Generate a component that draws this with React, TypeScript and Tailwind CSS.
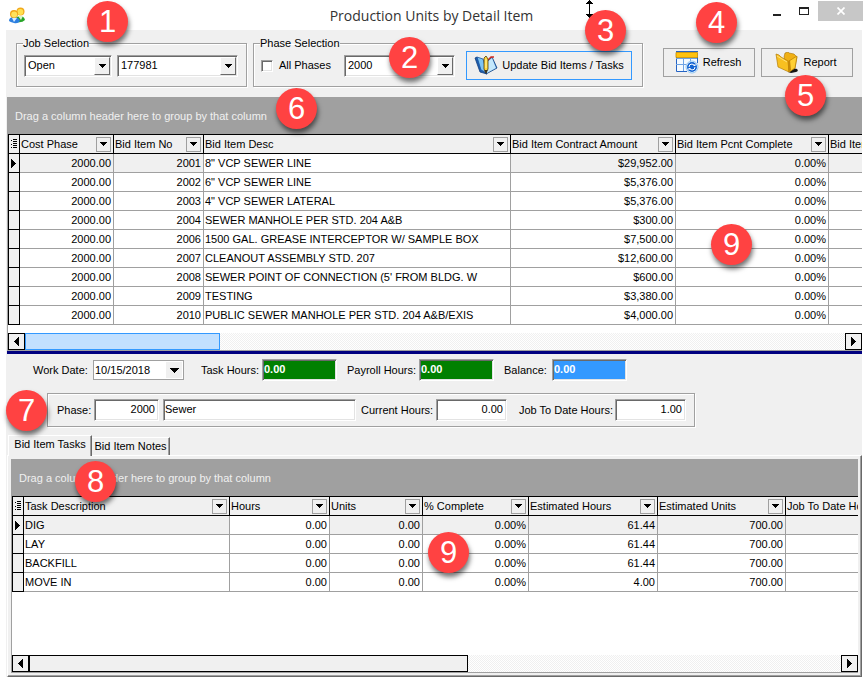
import { useState } from 'react'
import type { ReactNode } from 'react'
import clsx from 'clsx'

interface Column {
  title: string
  width: string
  align?: 'right'
  editable?: boolean
}

const itemColumns: Column[] = [
  { title: 'Cost Phase', width: 'w-[94px]', align: 'right' },
  { title: 'Bid Item No', width: 'w-[90px]', align: 'right' },
  { title: 'Bid Item Desc', width: 'w-[307px]', editable: true },
  { title: 'Bid Item Contract Amount', width: 'w-[165px]', align: 'right' },
  { title: 'Bid Item Pcnt Complete', width: 'w-[153px]', align: 'right' },
  { title: 'Bid Item', width: 'w-auto' },
]

const itemRows = [
  ['2000.00', '2001', '8" VCP SEWER LINE', '$29,952.00', '0.00%', ''],
  ['2000.00', '2002', '6" VCP SEWER LINE', '$5,376.00', '0.00%', ''],
  ['2000.00', '2003', '4" VCP SEWER LATERAL', '$5,376.00', '0.00%', ''],
  ['2000.00', '2004', 'SEWER MANHOLE PER STD. 204 A&B', '$300.00', '0.00%', ''],
  ['2000.00', '2006', '1500 GAL. GREASE INTERCEPTOR W/ SAMPLE BOX', '$7,500.00', '0.00%', ''],
  ['2000.00', '2007', 'CLEANOUT ASSEMBLY STD. 207', '$12,600.00', '0.00%', ''],
  ['2000.00', '2008', "SEWER POINT OF CONNECTION (5' FROM BLDG. W", '$600.00', '0.00%', ''],
  ['2000.00', '2009', 'TESTING', '$3,380.00', '0.00%', ''],
  ['2000.00', '2010', 'PUBLIC SEWER MANHOLE PER STD. 204 A&B/EXIS', '$4,000.00', '0.00%', ''],
]

const taskColumns: Column[] = [
  { title: 'Task Description', width: 'w-[206px]' },
  { title: 'Hours', width: 'w-[100px]', align: 'right', editable: true },
  { title: 'Units', width: 'w-[93px]', align: 'right' },
  { title: '% Complete', width: 'w-[106px]', align: 'right' },
  { title: 'Estimated Hours', width: 'w-[129px]', align: 'right' },
  { title: 'Estimated Units', width: 'w-[128px]', align: 'right' },
  { title: 'Job To Date Hours', width: 'w-auto' },
]

const taskRows = [
  ['DIG', '0.00', '0.00', '0.00%', '61.44', '700.00', ''],
  ['LAY', '0.00', '0.00', '0.00%', '61.44', '700.00', ''],
  ['BACKFILL', '0.00', '0.00', '0.00%', '61.44', '700.00', ''],
  ['MOVE IN', '0.00', '0.00', '0.00%', '4.00', '700.00', ''],
]

const sunken =
  'border border-t-[#a0a0a0] border-l-[#a0a0a0] border-r-white border-b-white shadow-[inset_1px_1px_0_#696969,inset_-1px_-1px_0_#e3e3e3]'
const etched = 'border border-[#a0a0a0] shadow-[1px_1px_0_#fff,inset_1px_1px_0_#fff]'

function DownArrow({ small }: { small?: boolean }) {
  return small ? (
    <svg width="7" height="4" viewBox="0 0 7 4" shapeRendering="crispEdges">
      <path d="M0 0h7v1H6v1H5v1H4v1H3V3H2V2H1V1H0z" />
    </svg>
  ) : (
    <svg width="9" height="5" viewBox="0 0 9 5" shapeRendering="crispEdges">
      <path d="M0 0h9v1H8v1H7v1H6v1H5v1H4V4H3V3H2V2H1V1H0z" />
    </svg>
  )
}

function SideArrow({ left }: { left?: boolean }) {
  return (
    <svg width="5" height="9" viewBox="0 0 5 9" shapeRendering="crispEdges">
      <path d={left ? 'M5 0v9H4V8H3V7H2V6H1V5H0V4h1V3h1V2h1V1h1V0z' : 'M0 0v9h1V8h1V7h1V6h1V5h1V4H4V3H3V2H2V1H1V0z'} />
    </svg>
  )
}

function Badge({ n, className }: { n: number; className: string }) {
  return (
    <span
      className={clsx(
        'pointer-events-none absolute z-20 flex size-[41px] items-center justify-center rounded-full bg-[#ff4242] text-[31px] leading-none text-white shadow-[1px_4px_5px_rgba(0,0,0,0.55)]',
        className
      )}
    >
      {n}
    </span>
  )
}

function ComboBox({ id, label, value, className, flat }: { id: string; label: string; value: string; className: string; flat?: boolean }) {
  return (
    <div className={clsx('relative bg-white', flat ? 'h-5 border border-[#a0a0a0]' : ['h-[22px]', sunken], className)}>
      <select
        id={id}
        aria-label={label}
        defaultValue={value}
        className={clsx('block h-full w-full appearance-none bg-transparent outline-none', flat ? 'px-px' : 'px-[3px]')}
      >
        <option>{value}</option>
      </select>
      <span
        className={clsx(
          'pointer-events-none absolute right-px top-px bottom-px flex w-4 items-center justify-center bg-[#f0f0f0]',
          !flat && 'border border-t-white border-l-white border-r-[#696969] border-b-[#696969]'
        )}
      >
        <DownArrow small={!flat} />
      </span>
    </div>
  )
}

function ToolButton({ icon, children, className }: { icon: ReactNode; children: ReactNode; className: string }) {
  return (
    <button type="button" className={clsx('flex h-[29px] items-center justify-center gap-1 border bg-[#efefef]', className)}>
      {icon}
      <span className="whitespace-nowrap">{children}</span>
    </button>
  )
}

function UsersIcon() {
  return (
    <svg width="18" height="18" viewBox="0 0 18 18">
      <path d="M8 14q0-4 4-4t5 4q-3 3-8 2z" fill="#28a428" />
      <path d="M10 10l3 4 2-4z" fill="#d9f5c8" />
      <circle cx="12.500" cy="5.500" r="4" fill="#f2a91c" />
      <circle cx="12.300" cy="6" r="3" fill="#ffe050" />
      <path d="M1 15q0-4 5-4t6 4q-2 3-6 2T1 15z" fill="#2c7fe0" />
      <path d="M4 12l2 4 3-4z" fill="#d4ecff" />
      <circle cx="6" cy="8" r="4" fill="#f0a418" />
      <circle cx="6.200" cy="8.600" r="3" fill="#ffe25c" />
    </svg>
  )
}

function BookIcon() {
  return (
    <svg width="24" height="21" viewBox="0 0 24 21">
      <path d="M1 3l2-1 6 14 4 3-7-2z" fill="#1c5cb0" stroke="#123f7c" strokeWidth=".8" />
      <path d="M3 2l6 2 4 14-6-3z" fill="#7cc4f4" stroke="#1a56a0" strokeWidth=".8" />
      <path d="M12 19l1-13 5-4 5 11z" fill="#2a78cc" stroke="#123f7c" strokeWidth=".8" />
      <path d="M13 18V7l5-4 4 10z" fill="#c4e8fc" />
      <path d="M14 5l3-3 3 0" fill="none" stroke="#d42d20" strokeWidth="1.300" />
      <path d="M10 3l2-2 2 3v10l-2 4-2-4z" fill="#ffd63b" stroke="#4a3a08" strokeWidth=".8" />
      <path d="M12 4v9" stroke="#fff3a4" />
      <path d="M10.500 15l1.500 4 1.500-4z" fill="#3b3320" />
    </svg>
  )
}

function RefreshIcon() {
  return (
    <svg width="24" height="23" viewBox="0 0 24 23">
      <path d="M1 6h21v14H1z" fill="#f4faff" />
      <path d="M1.500 6v14.500H12M22.500 6v6" fill="none" stroke="#2563c4" />
      <path d="M1 1.500h21.500v5H1z" fill="#ffc20e" stroke="#c08a00" strokeWidth=".8" />
      <path d="M1 .500h22" stroke="#2563c4" />
      <path d="M1 7.500h21M1 13.500h12M8.500 7v13M15.500 7v5" stroke="#6da3e4" />
      <circle cx="17" cy="16" r="6" fill="#fff" stroke="#8fc5f2" />
      <circle cx="17" cy="16" r="5" fill="#1264d2" />
      <path d="M14 16q0-3 3-3l2 1M20 16q0 3-3 3l-2-1" fill="none" stroke="#fff" />
      <path d="M18 15h2.500v-2.500zM16 17h-2.500v2.500z" fill="#fff" />
    </svg>
  )
}

function FolderIcon() {
  return (
    <svg width="24" height="22" viewBox="0 0 24 22">
      <path d="M13 20l5-4 4 1q2 2-1 3l-5 1z" fill="#141414" />
      <path d="M9 5l1-4 3-1 1 1 5 1 3 3-2 11-6 4z" fill="#f0b014" stroke="#a87204" strokeWidth=".6" />
      <path d="M1 2l3 1 2 2 7 4 1 11L3 15z" fill="#f8c020" stroke="#b47c06" strokeWidth=".7" />
      <path d="M14 9l8-5-2 12-6 4z" fill="#ffd034" stroke="#b47c06" strokeWidth=".7" />
      <path d="M13 9l2-1 1 10-2 2z" fill="#c88a08" />
      <path d="M2 4l10 6" stroke="#ffe98c" strokeWidth=".8" />
    </svg>
  )
}

function GroupPanel() {
  return (
    <div className="flex h-[37px] items-center bg-[#a0a0a0] px-2 pt-[2px] text-[#f0f0f0]">Drag a column header here to group by that column</div>
  )
}

function DataGrid({ columns, rows }: { columns: Column[]; rows: string[][] }) {
  return (
    <table className="w-full table-fixed border-separate border-spacing-0">
      <thead>
        <tr className="h-5 bg-[#f0f0f0]">
          <th aria-label="Row" className="w-3 border border-black p-0">
            <svg width="9" height="10" viewBox="0 0 9 10" shapeRendering="crispEdges">
              <path d="M2 1h1v1H2zM2 5h1v1H2zM4 0h4v1H4zM4 2h4v1H4zM4 4h4v1H4zM4 6h4v1H4zM4 8h4v1H4zM2 8h1v1H2z" />
            </svg>
          </th>
          {columns.map((col, i) => (
            <th
              key={col.title}
              className={clsx('overflow-hidden border-y border-black p-0 text-left font-normal', col.width, i < columns.length - 1 && 'border-r')}
            >
              <div className="flex h-[18px] items-center justify-between pl-px pr-[2px]">
                <span className="whitespace-nowrap">{col.title}</span>
                {i < columns.length - 1 && (
                  <button
                    type="button"
                    aria-label={`Filter ${col.title}`}
                    className="flex size-[15px] shrink-0 items-center justify-center border border-[#a0a0a0]"
                  >
                    <DownArrow small />
                  </button>
                )}
              </div>
            </th>
          ))}
        </tr>
      </thead>
      <tbody>
        {rows.map((row, r) => (
          <tr key={r} className="h-[19px]">
            <td className="border-x border-b border-black bg-[#f0f0f0] p-0 pl-[2px]">{r === 0 && <SideArrow />}</td>
            {row.map((cell, c) => (
              <td
                key={c}
                className={clsx(
                  'overflow-hidden border-b border-[#a0a0a0] p-0 whitespace-nowrap',
                  c < row.length - 1 && 'border-r',
                  columns[c].align === 'right' ? 'pr-[2px] text-right' : 'pl-px',
                  r === 0 && !columns[c].editable ? 'bg-[#f0f0f0]' : 'bg-white'
                )}
              >
                {cell}
              </td>
            ))}
          </tr>
        ))}
      </tbody>
    </table>
  )
}

function ScrollBar({ thumb }: { thumb: string }) {
  return (
    <div className="flex h-[17px] bg-[repeating-conic-gradient(#f0f0f0_0_25%,#fff_0_50%)] bg-[length:2px_2px]">
      <button type="button" aria-label="Scroll left" className="flex w-[17px] items-center justify-center border border-black bg-[#f0f0f0]">
        <SideArrow left />
      </button>
      <div className={clsx('border', thumb)} />
      <button type="button" aria-label="Scroll right" className="ml-auto flex w-[17px] items-center justify-center border border-black bg-[#f0f0f0]">
        <SideArrow />
      </button>
    </div>
  )
}

function TotalField({ id, label, labelWidth, color }: { id: string; label: string; labelWidth: string; color: string }) {
  return (
    <div className="flex items-center">
      <label htmlFor={id} className={clsx('whitespace-nowrap', labelWidth)}>{label}</label>
      <input id={id} readOnly defaultValue="0.00" className={clsx('h-[22px] w-[75px] px-px pb-[2px] font-bold text-white outline-none', sunken, color)} />
    </div>
  )
}

function PhaseField({ id, label, labelWidth, value, width }: { id: string; label: string; labelWidth: string; value: string; width: string }) {
  return (
    <div className="flex items-center">
      <label htmlFor={id} className={clsx('whitespace-nowrap', labelWidth)}>{label}</label>
      <input id={id} readOnly defaultValue={value} className={clsx('h-[22px] bg-white px-[3px] pb-[2px] text-right outline-none', sunken, width)} />
    </div>
  )
}

export default function App() {
  const [tab, setTab] = useState('tasks')

  return (
    <div className="relative flex min-h-screen flex-col overflow-hidden bg-white pb-px font-['Liberation_Sans',Arial,sans-serif] text-[11px] leading-[13px] text-black">
      {/* Title bar */}
      <header className="relative flex h-[30px] items-center justify-center pt-[2px]">
        <span className="absolute top-[6px] left-2"><UsersIcon /></span>
        <h1 className="font-['Open_Sans',sans-serif] text-sm text-[#333]">Production Units by Detail Item</h1>
        <svg className="absolute top-0 left-[585px]" width="9" height="18" viewBox="0 0 9 18" shapeRendering="crispEdges">
          <path d="M4 0h1v1h1v1h1v1h1v1H5v10h3v1H7v1H6v1H5v1H4v-1H3v-1H2v-1H1v-1h3V4H1V3h1V2h1V1h1z" />
        </svg>
        <div className="absolute top-px right-0 flex h-5 items-center">
          <button type="button" aria-label="Minimize" className="flex h-5 w-[26px] items-center justify-center">
            <span className="mt-[7px] h-[2px] w-2 bg-[#222]" />
          </button>
          <button type="button" aria-label="Maximize" className="flex h-5 w-7 items-center justify-center">
            <span className="h-2 w-[10px] border border-t-2 border-[#222]" />
          </button>
          <button type="button" aria-label="Close" className="flex h-5 w-[45px] items-center justify-center bg-[#c7c7c7]">
            <svg width="8" height="8" viewBox="0 0 8 8">
              <path d="M.5 .5l7 7M7.500 .5l-7 7" stroke="#fff" strokeWidth="1.700" />
            </svg>
          </button>
        </div>
      </header>

      <main className="mr-px ml-[6px] flex flex-1 flex-col bg-[#f0f0f0] pl-px">
        {/* Toolbar */}
        <div className="flex items-start gap-[6px] pt-[7px] pr-[9px] pb-[10px] pl-[9px]">
          <fieldset className={clsx('px-[7px] pt-px pb-[6px]', etched)}>
            <legend className="-ml-px">Job Selection</legend>
            <div className="flex h-[29px] items-center gap-[5px] pr-px">
              <ComboBox id="job-status" label="Job status" value="Open" className="w-[88px]" />
              <ComboBox id="job-number" label="Job number" value="177981" className="w-[121px]" />
            </div>
          </fieldset>

          <fieldset className={clsx('pt-px pr-[10px] pb-[6px] pl-[7px]', etched)}>
            <legend className="-ml-px">Phase Selection</legend>
            <div className="flex h-[29px] items-center">
              <label className="flex w-[83px] items-center gap-[6px] whitespace-nowrap">
                <input type="checkbox" className={clsx('size-3 appearance-none bg-white', sunken)} />
                All Phases
              </label>
              <ComboBox id="phase" label="Phase selection" value="2000" className="w-[111px]" />
              <ToolButton icon={<BookIcon />} className="ml-[11px] w-[166px] border-[#3399ff]">Update Bid Items / Tasks</ToolButton>
            </div>
          </fieldset>

          <div className="mt-[11px] ml-auto flex gap-[6px]">
            <ToolButton icon={<RefreshIcon />} className="w-[92px] border-[#a0a0a0] pr-[2px]">Refresh</ToolButton>
            <ToolButton icon={<FolderIcon />} className="w-[92px] border-[#a0a0a0] pr-[2px]">Report</ToolButton>
          </div>
        </div>

        {/* Bid items */}
        <section className="border-b-[3px] border-[#000080]">
          <GroupPanel />
          <div className="border-b border-l border-[#a0a0a0] bg-white">
            <DataGrid columns={itemColumns} rows={itemRows} />
            <div className="pt-2">
              <ScrollBar thumb="w-[195px] border-[#3399ff] bg-[#c2e0ff]" />
            </div>
          </div>
        </section>

        {/* Totals */}
        <div className="flex items-center gap-[10px] pt-[5px] pl-[26px]">
          <div className="mr-[7px] flex items-center">
            <label htmlFor="work-date" className="w-[60px] whitespace-nowrap">Work Date:</label>
            <ComboBox id="work-date" label="Work Date" value="10/15/2018" className="w-[91px]" flat />
          </div>
          <TotalField id="task-hours" label="Task Hours:" labelWidth="w-[61px]" color="bg-[#008000]" />
          <TotalField id="payroll-hours" label="Payroll Hours:" labelWidth="w-[72px]" color="bg-[#008000]" />
          <TotalField id="balance" label="Balance:" labelWidth="w-[48px]" color="bg-[#3399ff]" />
        </div>

        <div className={clsx('mt-3 ml-10 flex h-[34px] items-center self-start pr-2 pl-[9px]', etched)}>
          <PhaseField id="phase-no" label="Phase:" labelWidth="w-[37px]" value="2000" width="w-[65px]" />
          <input aria-label="Phase name" readOnly defaultValue="Sewer" className={clsx('ml-1 h-[22px] w-[193px] bg-white px-px pb-[2px] outline-none', sunken)} />
          <div className="ml-[5px] flex gap-3">
            <PhaseField id="current-hours" label="Current Hours:" labelWidth="w-[75px]" value="0.00" width="w-[71px]" />
            <PhaseField id="jtd-hours" label="Job To Date Hours:" labelWidth="w-[96px]" value="1.00" width="w-[71px]" />
          </div>
        </div>

        {/* Tabs */}
        <div role="tablist" className="mt-2 flex h-5 items-end pl-px">
          {[
            { id: 'tasks', label: 'Bid Item Tasks' },
            { id: 'notes', label: 'Bid Item Notes' },
          ].map(t => (
            <button
              key={t.id}
              type="button"
              role="tab"
              aria-selected={tab === t.id}
              onClick={() => setTab(t.id)}
              className={clsx(
                'border-t border-r border-t-white border-r-[#696969] bg-[#f0f0f0] whitespace-nowrap shadow-[inset_-1px_0_0_#a0a0a0]',
                tab === t.id ? 'relative z-10 -mb-px h-[21px] w-[84px] border-l border-l-white pb-1' : 'h-[18px] w-[78px]'
              )}
            >
              {t.label}
            </button>
          ))}
        </div>

        <div
          role="tabpanel"
          className="flex flex-1 flex-col border border-t-white border-r-[#696969] border-b-[#696969] border-l-white p-[3px] shadow-[inset_-1px_-1px_0_#a0a0a0]"
        >
          <div className="flex flex-1 flex-col border-b border-l border-[#a0a0a0] bg-white">
            <div className="-ml-px"><GroupPanel /></div>
            <DataGrid columns={taskColumns} rows={taskRows} />
            <div className="mt-auto">
              <ScrollBar thumb="w-[439px] border-black bg-[#f0f0f0]" />
            </div>
          </div>
        </div>
      </main>

      {/* Callouts */}
      <Badge n={1} className="top-px left-[87px]" />
      <Badge n={2} className="top-[37px] left-[389px]" />
      <Badge n={3} className="top-[10px] left-[585px]" />
      <Badge n={4} className="top-[2px] right-[126px]" />
      <Badge n={5} className="top-[75px] right-[37px]" />
      <Badge n={6} className="top-[88px] left-[276px]" />
      <Badge n={9} className="top-[224px] left-[711px]" />
      <Badge n={7} className="top-[390px] left-[6px]" />
      <Badge n={8} className="top-[461px] left-[75px]" />
      <Badge n={9} className="top-[532px] left-[428px]" />
    </div>
  )
}
